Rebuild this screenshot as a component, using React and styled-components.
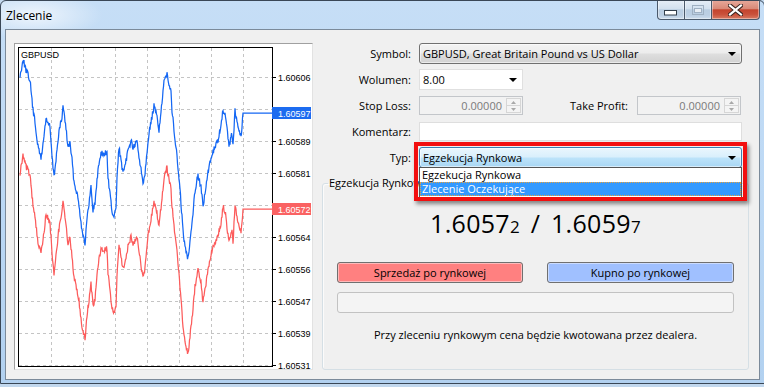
import React from 'react';
import styled, { createGlobalStyle } from 'styled-components';

const FONT = `"Open Sans", "Noto Sans", "DejaVu Sans", sans-serif`;

const GlobalStyle = createGlobalStyle`
  html, body { margin: 0; padding: 0; }
  body { background: #c2d8ee; font-family: ${FONT}; overflow: hidden; }
  #root { width: 764px; height: 387px; overflow: hidden; }
`;

const Window = styled.div`
  width: 765px;
  height: 384px;
  box-sizing: border-box;
  border: 1px solid #3a4756;
  border-radius: 6px 6px 0 0;
  background:
    radial-gradient(ellipse 70px 24px at 32px 14px, rgba(255,255,255,0.7), rgba(255,255,255,0) 100%),
    linear-gradient(180deg, #c6def6 0%, #bad7f4 60%, #b2d1f0 100%);
  display: flex;
  flex-direction: column;
  overflow: hidden;
`;

const TitleBar = styled.div`
  height: 28px;
  flex: none;
  display: flex;
  align-items: flex-start;
  padding-left: 5px;
`;

const Title = styled.div`
  margin-top: 7px;
  font-size: 12px;
  line-height: 16px;
  color: #000;
`;

const Controls = styled.div`
  margin-left: auto;
  margin-right: 4px;
  margin-top: -1px;
  height: 20px;
  display: flex;
`;

const CtrlBtn = styled.div`
  width: ${p => p.$w}px;
  height: 100%;
  box-sizing: border-box;
  border: 1px solid #4a596b;
  border-top: none;
  ${p => (p.$first ? '' : 'border-left: none;')}
  border-radius: ${p => p.$radius || '0'};
  background: ${p =>
    p.$close
      ? 'linear-gradient(180deg, #e8aa9c 0%, #d98a78 45%, #c4442e 52%, #c9503a 75%, #d87a62 100%)'
      : 'linear-gradient(180deg, #e6eef7 0%, #d3e1ef 45%, #b9cde1 52%, #bccfe3 80%, #cddcec 100%)'};
  box-shadow: inset 0 0 0 1px rgba(255,255,255,0.4);
  display: flex;
  align-items: center;
  justify-content: center;
`;

const Client = styled.div`
  flex: none;
  height: 351px;
  margin: 0 4px;
  box-sizing: border-box;
  border: 1px solid #7b8a9a;
  background: #f0f0f0;
  display: flex;
  align-items: flex-start;
  padding: 13px 10px 0 8px;
  gap: 9px;
`;

const ChartPanel = styled.div`
  width: 299px;
  height: 327px;
  flex: none;
  box-sizing: border-box;
  border: 1px solid;
  border-color: #a0a0a0 #e2e2e2 #e2e2e2 #a0a0a0;
  background: #fff;
  svg { display: block; }
`;

const RightPane = styled.div`
  width: 427px;
  flex: none;
  display: flex;
  flex-direction: column;
`;

const Row = styled.div`
  display: flex;
  align-items: center;
  height: ${p => p.$h}px;
  margin-top: ${p => p.$mt || 0}px;
`;

const Label = styled.div`
  width: ${p => p.$w || 89}px;
  margin-right: ${p => p.$gap || 8}px;
  flex: none;
  text-align: right;
  font-size: 11px;
  color: #000;
  white-space: nowrap;
`;

const comboBg = {
  grey: 'linear-gradient(180deg, #f3f3f3 0%, #ececec 48%, #dedede 52%, #d2d2d2 100%)',
  hot: 'linear-gradient(180deg, #eaf6fd 0%, #d9effc 48%, #bde3fa 52%, #a8d6f3 100%)',
  edit: '#ffffff',
};
const comboBorder = { grey: '#707070', hot: '#3c7fb1', edit: '#e0e0e0' };

const Combo = styled.div`
  width: ${p => p.$w}px;
  height: 100%;
  flex: none;
  box-sizing: border-box;
  border: 1px solid ${p => comboBorder[p.$variant]};
  border-radius: ${p => (p.$variant === 'edit' ? '0' : '3px')};
  background: ${p => comboBg[p.$variant]};
  box-shadow: ${p => (p.$variant === 'edit' ? 'none' : 'inset 0 0 0 1px rgba(255,255,255,0.55)')};
  display: flex;
  align-items: center;
  padding: 0 5px 0 3px;
  font-size: 11px;
  color: #000;
  white-space: nowrap;
`;

const ComboText = styled.span`
  flex: 1;
`;

const Spin = styled.div`
  width: ${p => p.$w}px;
  height: 100%;
  flex: none;
  box-sizing: border-box;
  border: 1px solid #c3c6ca;
  background: #f2f2f2;
  display: flex;
  align-items: center;
  padding: 1px;
`;

const SpinText = styled.span`
  flex: 1;
  text-align: right;
  padding-right: 4px;
  font-size: 11px;
  color: #7a7a7a;
`;

const SpinButtons = styled.div`
  width: 15px;
  height: 100%;
  box-sizing: border-box;
  border: 1px solid #d6d6d6;
  display: flex;
  flex-direction: column;
  background: #f4f4f4;
`;

const SpinHalf = styled.div`
  flex: 1;
  display: flex;
  align-items: center;
  justify-content: center;
  & + & { border-top: 1px solid #d6d6d6; }
`;

const Edit = styled.div`
  width: ${p => p.$w}px;
  height: 100%;
  flex: none;
  box-sizing: border-box;
  border: 1px solid #dedede;
  background: #fff;
`;

const TypWrap = styled.div`
  position: relative;
  width: 323px;
  height: 100%;
  flex: none;
  z-index: 3;
`;

const DropList = styled.div`
  position: absolute;
  left: 0;
  top: 20px;
  width: 323px;
  height: 31px;
  box-sizing: border-box;
  border: 1px solid #555;
  background: #fff;
  z-index: 1;
`;

const DropItem = styled.div`
  height: 14px;
  line-height: 14px;
  padding-left: 2px;
  font-size: 11px;
  white-space: nowrap;
  color: ${p => (p.$selected ? '#fff' : '#000')};
  background: ${p => (p.$selected ? '#3399ff' : 'transparent')};
  outline: ${p => (p.$selected ? '1px dotted #e9a13b' : 'none')};
  outline-offset: -1px;
`;

const RedFrame = styled.div`
  position: absolute;
  left: -5px;
  top: -5px;
  width: 333px;
  height: 59px;
  box-sizing: border-box;
  border: 4px solid #f20f0f;
  box-shadow: 2px 3px 4px rgba(0, 0, 0, 0.45);
  pointer-events: none;
  z-index: 2;
`;

const Group = styled.fieldset`
  margin: 8px 0 0 0;
  padding: 0;
  width: 427px;
  height: 194px;
  min-width: 0;
  box-sizing: border-box;
  border: 1px solid #d5dfe5;
  border-radius: 3px;
  box-shadow: inset 1px 1px 0 #fbfbfb;
  display: flex;
  flex-direction: column;
`;

const Legend = styled.legend`
  margin-left: 5px;
  padding: 0 1px;
  font-size: 11px;
  line-height: 14px;
  color: #000;
`;

const Price = styled.div`
  margin-top: 18px;
  text-align: center;
  font-size: 25px;
  line-height: 30px;
  letter-spacing: 0.3px;
  word-spacing: 4px;
  color: #000;
  white-space: nowrap;
`;

const PriceSmall = styled.span`
  font-size: 17px;
`;

const ButtonRow = styled.div`
  margin-top: 20px;
  padding: 0 14px;
  display: flex;
  justify-content: space-between;
`;

const TradeButton = styled.div`
  width: ${p => p.$w}px;
  height: 21px;
  box-sizing: border-box;
  border: 1px solid #707070;
  border-radius: 3px;
  background: ${p => p.$bg};
  box-shadow: inset 0 0 0 1px rgba(255,255,255,0.45);
  display: flex;
  align-items: center;
  justify-content: center;
  font-size: 11px;
  color: #000;
`;

const EmptyBar = styled.div`
  margin: 9px 14px 0;
  height: 21px;
  box-sizing: border-box;
  border: 1px solid #c2c2c2;
  border-radius: 3px;
  background: #f4f4f4;
`;

const Note = styled.div`
  margin-top: 14px;
  text-align: center;
  font-size: 11px;
  line-height: 15px;
  color: #000;
`;

/* ---------- icons ---------- */
const DownArrow = () => (
  <svg width="8" height="4" viewBox="0 0 8 4">
    <path d="M0 0 H8 L4 4 Z" fill="#000" />
  </svg>
);

const SmallArrow = ({ up }) => (
  <svg width="5" height="3" viewBox="0 0 5 3">
    <path d={up ? 'M0 3 H5 L2.5 0 Z' : 'M0 0 H5 L2.5 3 Z'} fill="#a8a8a8" />
  </svg>
);

const MinGlyph = () => (
  <svg width="14" height="7" viewBox="0 0 14 7" style={{ marginTop: 7 }}>
    <rect x="0.5" y="0.5" width="12" height="4.5" fill="#fff" stroke="#34404c" />
  </svg>
);

const MaxGlyph = () => (
  <svg width="12" height="10" viewBox="0 0 12 10">
    <rect x="0.5" y="0.5" width="11" height="9" fill="none" stroke="#9fb0c2" />
    <rect x="2.5" y="3.5" width="7" height="4" fill="#e8eef5" stroke="#9fb0c2" />
  </svg>
);

const CloseGlyph = () => (
  <svg width="15" height="12" viewBox="0 0 15 12">
    <path d="M2 1.5 L13 10.5 M13 1.5 L2 10.5" stroke="#3b2520" strokeWidth="4.2" strokeLinecap="square" />
    <path d="M2 1.5 L13 10.5 M13 1.5 L2 10.5" stroke="#fff" strokeWidth="2.2" strokeLinecap="square" />
  </svg>
);

/* ---------- chart ---------- */
const KEYS = [
  [20, 77], [23, 59], [26, 70], [30, 80], [33, 110], [35, 122], [38, 147], [41, 158], [43, 145],
  [46, 118], [48, 123], [50, 127], [52, 157], [54, 177], [57, 150], [59, 132], [62, 117], [63, 106],
  [65, 120], [68, 147], [70, 143], [72, 160], [74, 182], [77, 193], [79, 205], [82, 230], [85, 243],
  [87, 220], [91, 187], [93, 210], [95, 203], [98, 170], [101, 152], [103, 155], [107, 152],
  [108, 177], [111, 203], [113, 218], [116, 210], [117, 177], [119, 147], [122, 168], [124, 173],
  [127, 155], [131, 140], [133, 148], [137, 142], [140, 163], [143, 182], [145, 173], [148, 140],
  [152, 117], [154, 106], [157, 117], [159, 130], [162, 103], [164, 83], [167, 72], [169, 83],
  [171, 93], [172, 110], [174, 130], [177, 157], [180, 190], [183, 230], [185, 248], [188, 258],
  [190, 240], [193, 213], [195, 190], [198, 175], [201, 187], [203, 207], [206, 187], [208, 173],
  [212, 153], [215, 148], [218, 140], [221, 127], [223, 110], [225, 115], [227, 130], [229, 147],
  [232, 133], [233, 147], [235, 110], [237, 120], [239, 130], [241, 137], [243, 113],
];

function makeRng(seed) {
  let s = seed;
  return () => {
    s = (s * 1103515245 + 12345) & 0x7fffffff;
    return s / 0x7fffffff;
  };
}

function interp(x) {
  for (let i = 0; i < KEYS.length - 1; i++) {
    const [x0, y0] = KEYS[i];
    const [x1, y1] = KEYS[i + 1];
    if (x >= x0 && x <= x1) return y0 + ((y1 - y0) * (x - x0)) / (x1 - x0);
  }
  return KEYS[KEYS.length - 1][1];
}

function buildPath(offset, seed) {
  const r = makeRng(seed);
  let d = '';
  for (let x = 20; x < 243; x += 1) {
    const a = interp(x) + offset + (r() - 0.5) * 6;
    const b = interp(x + 0.5) + offset + (r() - 0.5) * 6;
    d += `${d ? 'L' : 'M'}${x} ${a.toFixed(1)} L${x + 0.5} ${b.toFixed(1)} `;
  }
  d += `L243 ${113 + offset} L272 ${113 + offset}`;
  return d;
}

const BLUE_PATH = buildPath(0, 7);
const RED_PATH = buildPath(96, 31);

const GRID_X = [51, 83, 115, 147, 179, 211, 243];
const GRID_Y = [77, 109, 141, 173, 205, 237, 269, 301, 333, 365];
const AXIS = ['1.60606', '', '1.60589', '1.60581', '', '1.60564', '1.60556', '1.60547', '1.60539', '1.60531'];

const Chart = () => (
  <svg width="297" height="325" viewBox="15 44 297 325" fontFamily='"Liberation Sans", Arial, sans-serif'>
    <defs>
      <clipPath id="plot">
        <rect x="19" y="48" width="253" height="318" />
      </clipPath>
    </defs>
    {GRID_X.map(x => (
      <line key={x} x1={x + 0.5} y1="48" x2={x + 0.5} y2="366" stroke="#c4c4c4" strokeDasharray="3 3" shapeRendering="crispEdges" />
    ))}
    {GRID_Y.map(y => (
      <line key={y} x1="19" y1={y + 0.5} x2="272" y2={y + 0.5} stroke="#c4c4c4" strokeDasharray="3 3" shapeRendering="crispEdges" />
    ))}
    <g clipPath="url(#plot)" fill="none" strokeWidth="1.25" strokeLinejoin="miter">
      <path d={RED_PATH} stroke="#fc5b5b" />
      <path d={BLUE_PATH} stroke="#1467f4" />
    </g>
    <rect x="18.5" y="47.5" width="254" height="319" fill="none" stroke="#000" shapeRendering="crispEdges" />
    {GRID_Y.map((y, i) => (
      <g key={y}>
        <line x1="273" y1={y + 0.5} x2="276" y2={y + 0.5} stroke="#000" shapeRendering="crispEdges" />
        {AXIS[i] && (
          <text x="278" y={y + 3.5} fontSize="9" fill="#000">{AXIS[i]}</text>
        )}
      </g>
    ))}
    <rect x="272" y="107" width="39" height="12" fill="#1c6cf0" />
    <text x="278" y="116.5" fontSize="9" fill="#fff">1.60597</text>
    <rect x="272" y="203" width="39" height="12" fill="#fa6262" />
    <text x="278" y="212.5" fontSize="9" fill="#fff">1.60572</text>
    <text x="21" y="57.5" fontSize="9" fill="#000">GBPUSD</text>
  </svg>
);

export default function App() {
  return (
    <>
      <GlobalStyle />
      <Window>
        <TitleBar>
          <Title>Zlecenie</Title>
          <Controls>
            <CtrlBtn $w={28} $first $radius="0 0 0 4px"><MinGlyph /></CtrlBtn>
            <CtrlBtn $w={27}><MaxGlyph /></CtrlBtn>
            <CtrlBtn $w={48} $close $radius="0 0 4px 0"><CloseGlyph /></CtrlBtn>
          </Controls>
        </TitleBar>
        <Client>
          <ChartPanel>
            <Chart />
          </ChartPanel>
          <RightPane>
            <Row $h={21}>
              <Label>Symbol:</Label>
              <Combo $w={323} $variant="grey">
                <ComboText>GBPUSD, Great Britain Pound vs US Dollar</ComboText>
                <DownArrow />
              </Combo>
            </Row>
            <Row $h={21} $mt={5}>
              <Label>Wolumen:</Label>
              <Combo $w={104} $variant="edit">
                <ComboText>8.00</ComboText>
                <DownArrow />
              </Combo>
            </Row>
            <Row $h={19} $mt={6}>
              <Label>Stop Loss:</Label>
              <Spin $w={104}>
                <SpinText>0.00000</SpinText>
                <SpinButtons>
                  <SpinHalf><SmallArrow up /></SpinHalf>
                  <SpinHalf><SmallArrow /></SpinHalf>
                </SpinButtons>
              </Spin>
              <Label $w={105} $gap={9}>Take Profit:</Label>
              <Spin $w={104}>
                <SpinText>0.00000</SpinText>
                <SpinButtons>
                  <SpinHalf><SmallArrow up /></SpinHalf>
                  <SpinHalf><SmallArrow /></SpinHalf>
                </SpinButtons>
              </Spin>
            </Row>
            <Row $h={19} $mt={7}>
              <Label>Komentarz:</Label>
              <Edit $w={323} />
            </Row>
            <Row $h={21} $mt={6}>
              <Label>Typ:</Label>
              <TypWrap>
                <Combo $w={323} $variant="hot">
                  <ComboText>Egzekucja Rynkowa</ComboText>
                  <DownArrow />
                </Combo>
                <DropList>
                  <DropItem>Egzekucja Rynkowa</DropItem>
                  <DropItem $selected>Zlecenie Oczekujące</DropItem>
                </DropList>
                <RedFrame />
              </TypWrap>
            </Row>
            <Group>
              <Legend>Egzekucja Rynkowa</Legend>
              <Price>
                1.6057<PriceSmall>2</PriceSmall> / 1.6059<PriceSmall>7</PriceSmall>
              </Price>
              <ButtonRow>
                <TradeButton $w={186} $bg="#ff8080">Sprzedaż po rynkowej</TradeButton>
                <TradeButton $w={187} $bg="#a0c0ff">Kupno po rynkowej</TradeButton>
              </ButtonRow>
              <EmptyBar />
              <Note>Przy zleceniu rynkowym cena będzie kwotowana przez dealera.</Note>
            </Group>
          </RightPane>
        </Client>
      </Window>
    </>
  );
}
